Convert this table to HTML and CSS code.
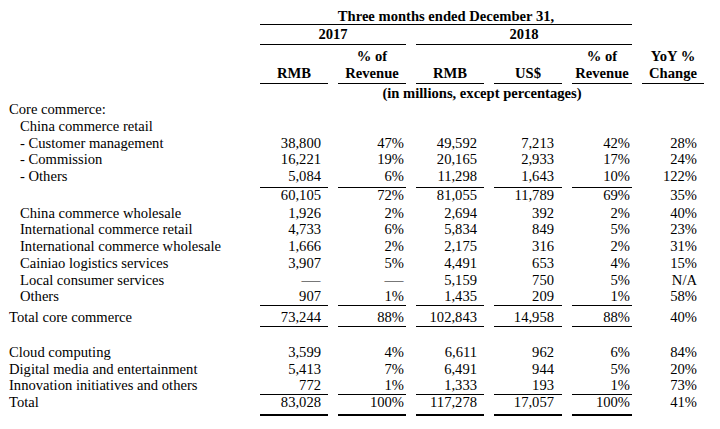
FILE: index.html
```html
<!DOCTYPE html>
<html lang="en">
<head>
<meta charset="utf-8">
<title>Revenue table</title>
<link rel="stylesheet" href="styles.css">
</head>
<body>
<div class="table">
  <div class="row r-title">
    <div class="c"></div>
    <div class="c hd span-2-7 ul">Three months ended December 31,</div>
  </div>
  <div class="row r-year">
    <div class="c"></div>
    <div class="c hd span-2-4 ul">2017</div>
    <div class="c hd span-4-7 ul">2018</div>
  </div>
  <div class="row r-cols">
    <div class="c"></div>
    <div class="c hd stack ul">RMB</div>
    <div class="c hd stack ul">% of<br>Revenue</div>
    <div class="c hd stack ul">RMB</div>
    <div class="c hd stack ul">US$</div>
    <div class="c hd stack ul">% of<br>Revenue</div>
    <div class="c hd stack ul">YoY %<br>Change</div>
  </div>
  <div class="row r-unit">
    <div class="c"></div>
    <div class="c hd span-2-8">(in millions, except percentages)</div>
  </div>

  <div class="row">
    <div class="c lbl">Core commerce:</div>
  </div>
  <div class="row">
    <div class="c lbl in">China commerce retail</div>
  </div>
  <div class="row">
    <div class="c lbl in">- Customer management</div>
    <div class="c n rmb">38,800</div><div class="c n pct">47%</div><div class="c n rmb">49,592</div><div class="c n usd">7,213</div><div class="c n pct">42%</div><div class="c n yoy">28%</div>
  </div>
  <div class="row">
    <div class="c lbl in">- Commission</div>
    <div class="c n rmb">16,221</div><div class="c n pct">19%</div><div class="c n rmb">20,165</div><div class="c n usd">2,933</div><div class="c n pct">17%</div><div class="c n yoy">24%</div>
  </div>
  <div class="row r-ul1">
    <div class="c lbl in">- Others</div>
    <div class="c n rmb ul">5,084</div><div class="c n pct ul">6%</div><div class="c n rmb ul">11,298</div><div class="c n usd ul">1,643</div><div class="c n pct ul">10%</div><div class="c n yoy">122%</div>
  </div>
  <div class="row r-sub">
    <div class="c lbl"></div>
    <div class="c n rmb">60,105</div><div class="c n pct">72%</div><div class="c n rmb">81,055</div><div class="c n usd">11,789</div><div class="c n pct">69%</div><div class="c n yoy">35%</div>
  </div>
  <div class="row">
    <div class="c lbl in">China commerce wholesale</div>
    <div class="c n rmb">1,926</div><div class="c n pct">2%</div><div class="c n rmb">2,694</div><div class="c n usd">392</div><div class="c n pct">2%</div><div class="c n yoy">40%</div>
  </div>
  <div class="row">
    <div class="c lbl in">International commerce retail</div>
    <div class="c n rmb">4,733</div><div class="c n pct">6%</div><div class="c n rmb">5,834</div><div class="c n usd">849</div><div class="c n pct">5%</div><div class="c n yoy">23%</div>
  </div>
  <div class="row">
    <div class="c lbl in">International commerce wholesale</div>
    <div class="c n rmb">1,666</div><div class="c n pct">2%</div><div class="c n rmb">2,175</div><div class="c n usd">316</div><div class="c n pct">2%</div><div class="c n yoy">31%</div>
  </div>
  <div class="row">
    <div class="c lbl in">Cainiao logistics services</div>
    <div class="c n rmb">3,907</div><div class="c n pct">5%</div><div class="c n rmb">4,491</div><div class="c n usd">653</div><div class="c n pct">4%</div><div class="c n yoy">15%</div>
  </div>
  <div class="row">
    <div class="c lbl in">Local consumer services</div>
    <div class="c n rmb"><span class="dash">—</span></div><div class="c n pct"><span class="dash">—</span></div><div class="c n rmb">5,159</div><div class="c n usd">750</div><div class="c n pct">5%</div><div class="c n yoy">N/A</div>
  </div>
  <div class="row r-ul2">
    <div class="c lbl in">Others</div>
    <div class="c n rmb ul">907</div><div class="c n pct ul">1%</div><div class="c n rmb ul">1,435</div><div class="c n usd ul">209</div><div class="c n pct ul">1%</div><div class="c n yoy">58%</div>
  </div>
  <div class="row r-total-core">
    <div class="c lbl">Total core commerce</div>
    <div class="c n rmb ul">73,244</div><div class="c n pct ul">88%</div><div class="c n rmb ul">102,843</div><div class="c n usd ul">14,958</div><div class="c n pct ul">88%</div><div class="c n yoy">40%</div>
  </div>

  <div class="row r-gap">
    <div class="c lbl">Cloud computing</div>
    <div class="c n rmb">3,599</div><div class="c n pct">4%</div><div class="c n rmb">6,611</div><div class="c n usd">962</div><div class="c n pct">6%</div><div class="c n yoy">84%</div>
  </div>
  <div class="row">
    <div class="c lbl">Digital media and entertainment</div>
    <div class="c n rmb">5,413</div><div class="c n pct">7%</div><div class="c n rmb">6,491</div><div class="c n usd">944</div><div class="c n pct">5%</div><div class="c n yoy">20%</div>
  </div>
  <div class="row r-ul2">
    <div class="c lbl">Innovation initiatives and others</div>
    <div class="c n rmb ul">772</div><div class="c n pct ul">1%</div><div class="c n rmb ul">1,333</div><div class="c n usd ul">193</div><div class="c n pct ul">1%</div><div class="c n yoy">73%</div>
  </div>
  <div class="row r-total">
    <div class="c lbl">Total</div>
    <div class="c n rmb ul2">83,028</div><div class="c n pct ul2">100%</div><div class="c n rmb ul2">117,278</div><div class="c n usd ul2">17,057</div><div class="c n pct ul2">100%</div><div class="c n yoy">41%</div>
  </div>
</div>
</body>
</html>
```

FILE: styles.css
```css
html, body {
  margin: 0;
  padding: 0;
  background: #ffffff;
}

body {
  font-family: "Liberation Serif", "Times New Roman", serif;
  font-size: 14.6px;
  color: #000000;
}

.table {
  width: 720px;
}

.row {
  --pt: 0px;
  --lh: 16.7px;
  --pb: 0px;
  display: grid;
  grid-template-columns: 250px 68px 68px 68px 68px 60px 62px;
  column-gap: 10px;
  padding-top: var(--pt);
}

.c {
  line-height: var(--lh);
  padding-bottom: var(--pb);
  white-space: nowrap;
}

.hd {
  font-weight: bold;
  text-align: center;
}

.stack {
  display: flex;
  flex-direction: column;
  justify-content: flex-end;
  align-items: center;
}

.span-2-7 { grid-column: 2 / 7; }
.span-2-4 { grid-column: 2 / 4; }
.span-4-7 { grid-column: 4 / 7; }
.span-2-8 { grid-column: 2 / 8; }

.ul { border-bottom: 1px solid #000; }
.ul2 { border-bottom: 2px solid #000; }

.lbl { padding-left: 9px; }
.lbl.in { padding-left: 20px; }

.n { text-align: right; }
.rmb { padding-right: 7px; }
.pct { padding-right: 2px; }
.usd { padding-right: 8px; }
.yoy { padding-right: 7px; }

.dash {
  display: inline-block;
  transform: scaleX(1.3);
  transform-origin: right center;
}

/* vertical rhythm */
.r-title { --pt: 7.65px; }
.r-year { --pb: 1.65px; padding-top: 0.3px; }
.r-cols { --pt: 3.5px; --lh: 17px; --pb: 0.5px; }
.r-unit { --pt: 0.65px; }
.r-ul1 { --pb: 1.75px; }
.r-sub { --pt: 2.5px; --lh: 10px; --pb: 4.65px; }
.r-ul2 { --pb: 0.25px; }
.r-total-core { --pt: 2.65px; }
.r-gap { --pt: 17.3px; }
.r-total { --lh: 14px; --pb: 5px; }
```
